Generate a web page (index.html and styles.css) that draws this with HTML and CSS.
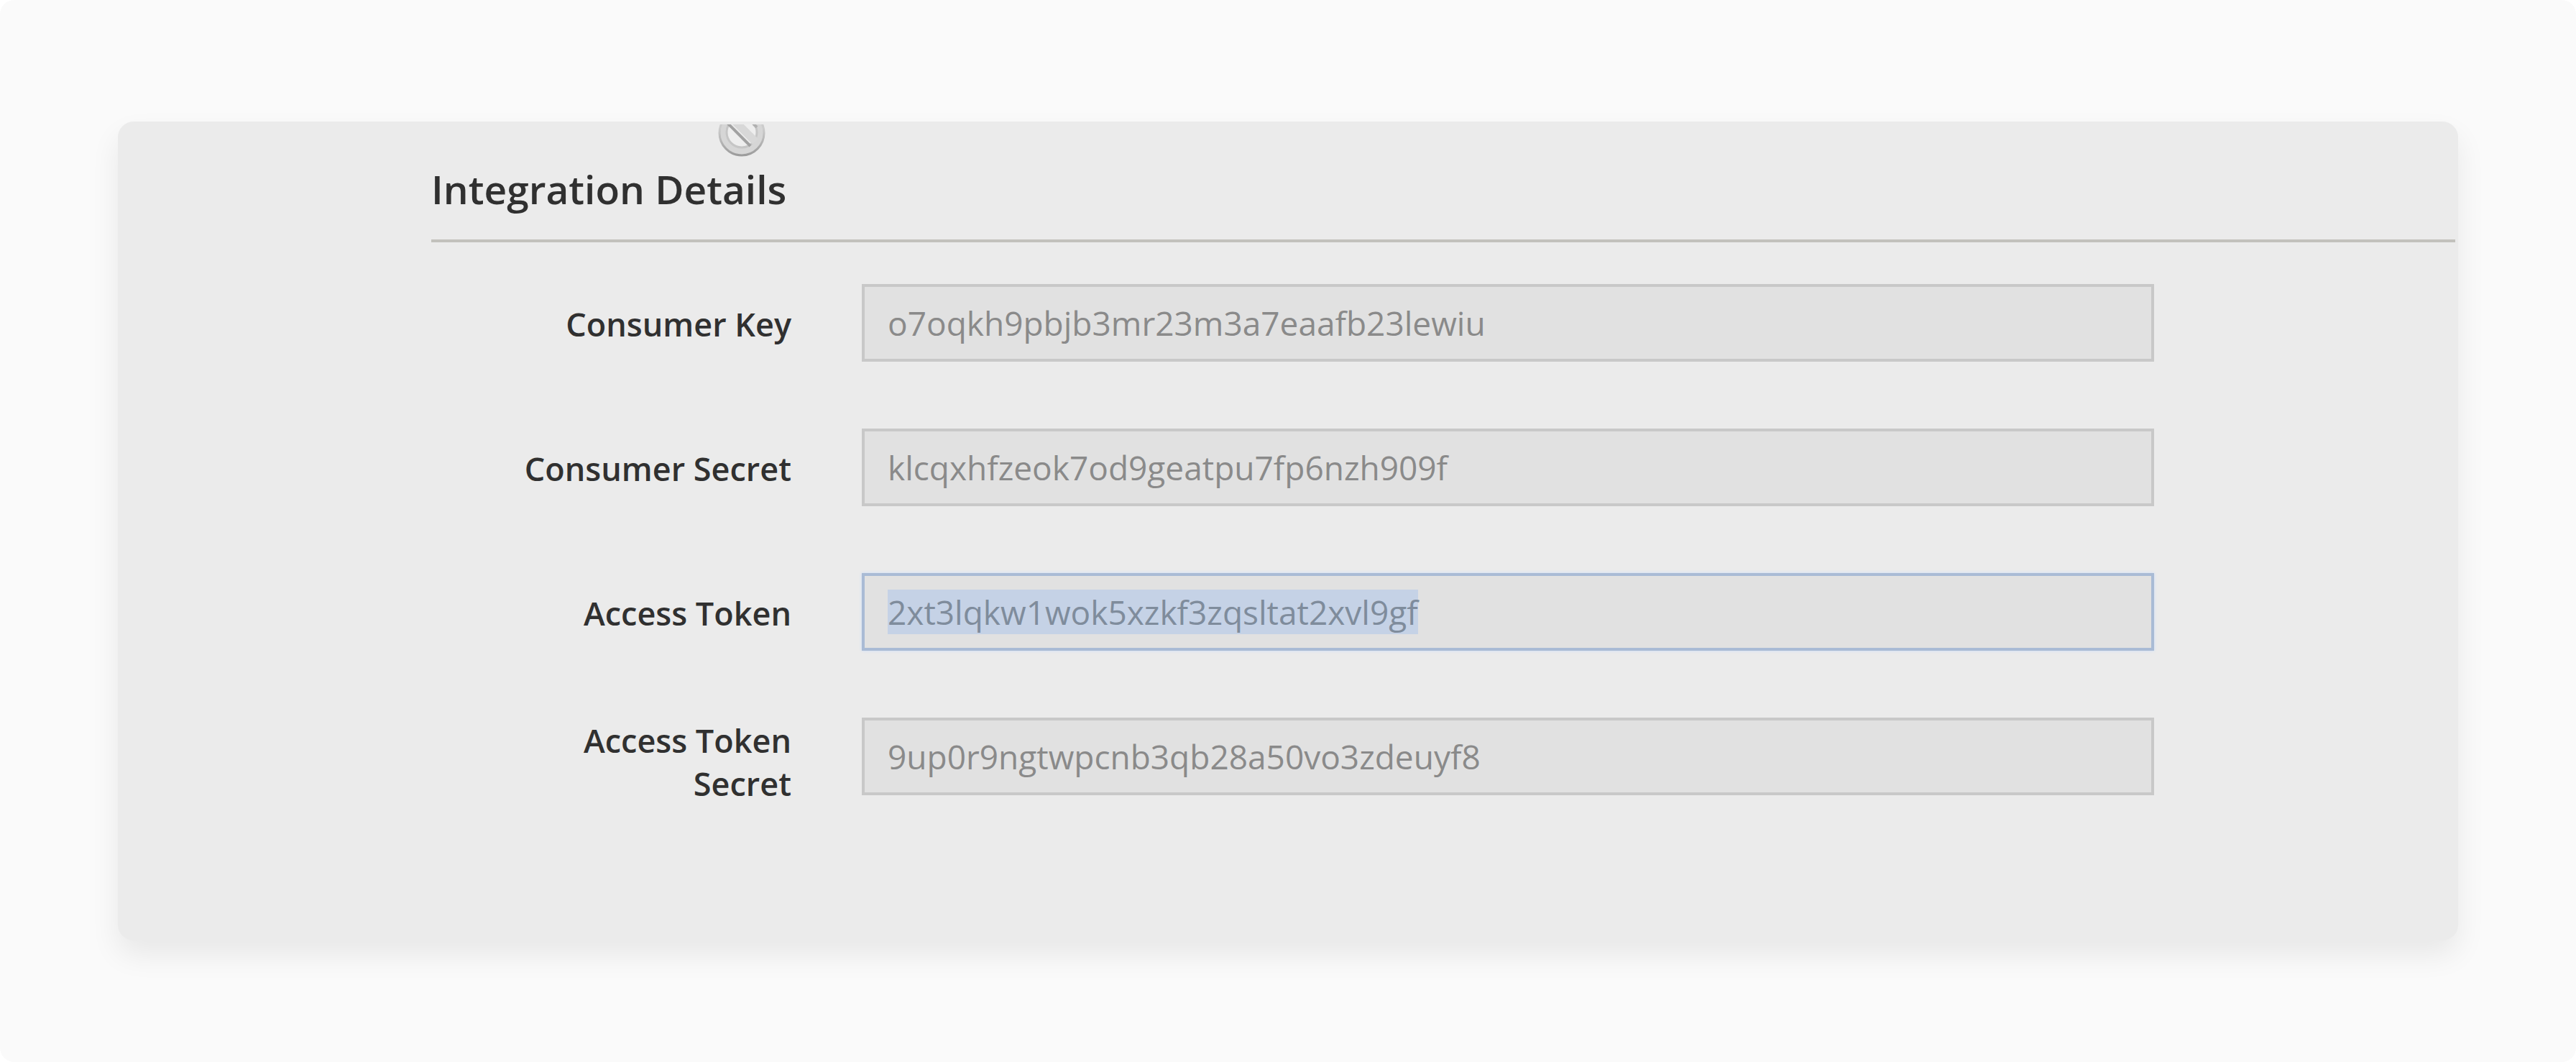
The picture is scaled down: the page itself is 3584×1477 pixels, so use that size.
FILE: index.html
```html
<!DOCTYPE html>
<html lang="en">
<head>
<meta charset="utf-8">
<title>Integration Details</title>
<link rel="stylesheet" href="styles.css">
</head>
<body>
<main class="page">
  <section class="card">
    <header class="card-header">
      <h1 class="title">Integration Details</h1>
      <svg class="blocked-icon" viewBox="0 0 68 48" aria-hidden="true">
        <defs>
          <linearGradient id="ring" x1="0" y1="0" x2="0" y2="1">
            <stop offset="0.4" stop-color="#cccccc"/>
            <stop offset="1" stop-color="#9c9c9c"/>
          </linearGradient>
        </defs>
        <circle cx="34" cy="12" r="31" fill="#d6d6d6" stroke="url(#ring)" stroke-width="3"/>
        <circle cx="34" cy="11" r="21" fill="#eeeeee" stroke="#c6c6c6" stroke-width="3"/>
        <path d="M22 -7L53 24" stroke="#d8d8d8" stroke-width="11"/>
        <path d="M13 -3L46 30" stroke="#a2a2a2" stroke-width="4"/>
        <path d="M50 -1L55 4" stroke="#b0b0b0" stroke-width="4"/>
      </svg>
    </header>
    <form class="fields">
      <div class="row">
        <label class="label" for="consumer-key">Consumer Key</label>
        <input class="input" id="consumer-key" type="text" readonly value="o7oqkh9pbjb3mr23m3a7eaafb23lewiu">
      </div>
      <div class="row">
        <label class="label" for="consumer-secret">Consumer Secret</label>
        <input class="input" id="consumer-secret" type="text" readonly value="klcqxhfzeok7od9geatpu7fp6nzh909f">
      </div>
      <div class="row">
        <label class="label" for="access-token">Access Token</label>
        <input class="input" id="access-token" type="text" readonly value="2xt3lqkw1wok5xzkf3zqsltat2xvl9gf">
      </div>
      <div class="row">
        <label class="label label-two-line" for="access-token-secret">Access Token Secret</label>
        <input class="input" id="access-token-secret" type="text" readonly value="9up0r9ngtwpcnb3qb28a50vo3zdeuyf8">
      </div>
    </form>
  </section>
</main>
<script src="script.js"></script>
</body>
</html>
```
FILE: styles.css
```css
* {
  box-sizing: border-box;
}

body {
  margin: 0;
  background: #ffffff;
  font-family: "Open Sans", "Noto Sans", sans-serif;
  color: #303030;
}

.page {
  min-height: 100vh;
  padding: 169px 164px;
  border-radius: 20px;
  background: #fafafa;
}

.card {
  padding: 0 4px 188px 436px;
  border-radius: 22px;
  background: #ebebeb;
  box-shadow: 0 20px 40px rgba(0, 0, 0, 0.075);
}

.card-header {
  position: relative;
  padding: 54px 0 30px;
  border-bottom: 4px solid #c2c1bc;
}

.title {
  margin: 0;
  font-size: 55px;
  font-weight: 600;
  line-height: 80px;
}

.blocked-icon {
  position: absolute;
  top: 4px;
  left: 398px;
  width: 68px;
  height: 48px;
}

.fields {
  display: flex;
  flex-direction: column;
  gap: 93px;
  padding-top: 58px;
}

.row {
  display: grid;
  grid-template-columns: 501fr 1798fr 321fr;
  column-gap: 98px;
  align-items: start;
}

.label {
  justify-self: end;
  max-width: 400px;
  padding-top: 26px;
  font-size: 45px;
  font-weight: 600;
  line-height: 60px;
  text-align: right;
}

.label-two-line {
  padding-top: 2px;
}

.input {
  width: 100%;
  height: 108px;
  margin: 0;
  padding: 0 32px;
  border: 4px solid #c8c8c8;
  border-radius: 0;
  outline: none;
  background: #e1e1e1;
  color: #8a8a8a;
  font-family: inherit;
  font-size: 46px;
  line-height: 60px;
}

.input:focus {
  border-color: #a9bbd5;
  box-shadow: 0 0 4px #c9dcf8;
}

.input::selection {
  background: #c5d2e6;
  color: #7f8c9c;
}
```
FILE: script.js
```js
document.getElementById('access-token').select();
```
